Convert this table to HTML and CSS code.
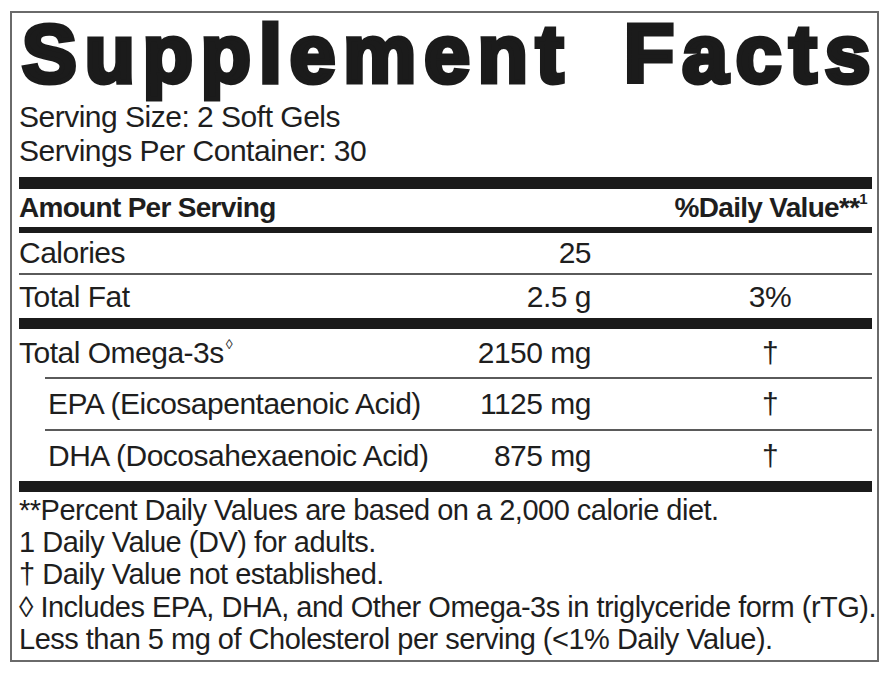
FILE: index.html
```html
<!DOCTYPE html>
<html lang="en">
<head>
<meta charset="utf-8">
<title>Supplement Facts</title>
<link rel="stylesheet" href="styles.css">
</head>
<body>
<div class="label">
  <h1 class="title"><span class="word">Supplement</span> <span class="word">Facts</span></h1>
  <div class="serving">
    <p class="line">Serving Size: 2 Soft Gels</p>
    <p class="line">Servings Per Container: 30</p>
  </div>
  <div class="bar bar-thick"></div>
  <div class="row head-row">
    <span class="name">Amount Per Serving</span>
    <span class="amt"></span>
    <span class="dv dv-head">%Daily Value**<sup class="sup-one">1</sup></span>
  </div>
  <div class="bar bar-mid"></div>
  <div class="row row-cal">
    <span class="name">Calories</span>
    <span class="amt">25</span>
    <span class="dv"></span>
  </div>
  <div class="row row-fat">
    <span class="name">Total Fat</span>
    <span class="amt">2.5 g</span>
    <span class="dv">3%</span>
  </div>
  <div class="bar bar-thick bar-3"></div>
  <div class="row row-omega">
    <span class="name">Total Omega-3s<sup class="sup-loz">&#9674;</sup></span>
    <span class="amt">2150 mg</span>
    <span class="dv">&dagger;</span>
  </div>
  <div class="row row-sub">
    <span class="name">EPA (Eicosapentaenoic Acid)</span>
    <span class="amt">1125 mg</span>
    <span class="dv">&dagger;</span>
  </div>
  <div class="row row-sub row-last">
    <span class="name">DHA (Docosahexaenoic Acid)</span>
    <span class="amt">875 mg</span>
    <span class="dv">&dagger;</span>
  </div>
  <div class="bar bar-thick bar-4"></div>
  <div class="notes">
    <p class="line">**Percent Daily Values are based on a 2,000 calorie diet.</p>
    <p class="line">1 Daily Value (DV) for adults.</p>
    <p class="line">&dagger; Daily Value not established.</p>
    <p class="line">&#9674; Includes EPA, DHA, and Other Omega-3s in triglyceride form (rTG).</p>
    <p class="line">Less than 5 mg of Cholesterol per serving (&lt;1% Daily Value).</p>
  </div>
</div>
</body>
</html>
```

FILE: styles.css
```css
html, body {
  margin: 0;
  padding: 0;
  background: #ffffff;
}

body {
  font-family: "Liberation Sans", Arial, sans-serif;
  color: #1e1e1e;
}

.label {
  box-sizing: border-box;
  margin: 11px 0 0 10px;
  width: 869px;
  height: 651px;
  border: 2px solid #6a6a6a;
  padding: 0 5px 0 7px;
}

.title {
  margin: 0;
  height: 87px;
  font-family: "Liberation Sans", Arial, sans-serif;
  font-weight: 700;
  font-size: 82px;
  line-height: 81px;
  letter-spacing: 8px;
  word-spacing: 22px;
  white-space: nowrap;
  -webkit-text-stroke: 5px #1b1b1b;
  padding-left: 3px;
  color: #1b1b1b;
}

.serving {
  height: 77px;
}

.line {
  margin: 0;
  font-size: 30px;
  line-height: 34px;
  letter-spacing: -0.5px;
  white-space: nowrap;
}

.bar {
  background: #1b1b1b;
}

.bar-thick {
  height: 12px;
}

.bar-mid {
  height: 6px;
}

.bar-3 {
  height: 11px;
}

.bar-4 {
  height: 11px;
}

.row {
  display: grid;
  grid-template-columns: 1fr 150px 281px;
  align-items: center;
  font-size: 30px;
  letter-spacing: -0.5px;
  white-space: nowrap;
}

.row .amt {
  text-align: right;
}

.row .dv {
  text-align: center;
  padding-left: 77px;
}

.head-row {
  height: 38px;
  font-weight: 700;
  font-size: 28px;
  letter-spacing: -0.7px;
}

.head-row .dv-head {
  padding-left: 0;
  text-align: right;
  padding-right: 5px;
}

.sup-one {
  font-size: 15px;
  vertical-align: top;
  position: relative;
  top: -2px;
}

.row-cal {
  height: 40px;
  border-bottom: 2px solid #5a5a5a;
}

.row-fat {
  height: 43px;
}

.row-omega {
  height: 48px;
}

.sup-loz {
  font-size: 14px;
  vertical-align: top;
  position: relative;
  top: 0;
  margin-left: 2px;
}

.row-sub {
  margin-left: 26px;
  height: 50px;
  border-top: 2px solid #5a5a5a;
}

.row-sub .name {
  padding-left: 3px;
}

.notes {
  padding-top: 2px;
}

.notes .line {
  font-size: 29px;
  line-height: 32.2px;
}
```
